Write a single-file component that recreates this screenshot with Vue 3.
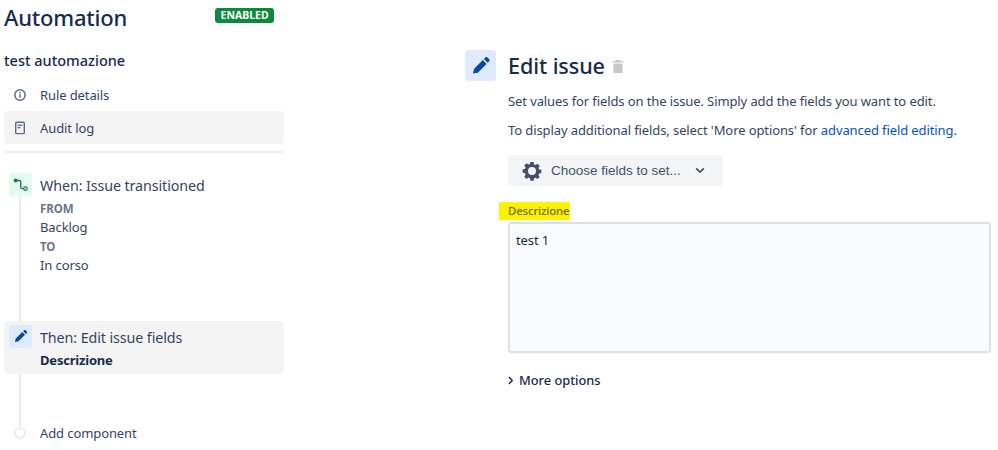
<script setup>
const nav = [
  { label: 'Rule details', icon: 'info', active: false },
  { label: 'Audit log', icon: 'log', active: true },
]
</script>

<template>
  <div class="page">
    <aside class="side">
      <header class="head">
        <h1>Automation</h1>
        <span class="badge">ENABLED</span>
      </header>
      <h2 class="rule">test automazione</h2>
      <nav class="nav">
        <div v-for="n in nav" :key="n.label" class="nav-item" :class="{ on: n.active }">
          <svg v-if="n.icon === 'info'" class="nav-ic" viewBox="0 0 14 14" width="14" height="14">
            <circle cx="7" cy="7" r="5.2" fill="none" stroke="#5e6c84" stroke-width="1.5" />
            <rect x="6.3" y="6.2" width="1.4" height="3.6" fill="#5e6c84" />
            <circle cx="7" cy="4.6" r=".85" fill="#5e6c84" />
          </svg>
          <svg v-else class="nav-ic" viewBox="0 0 14 14" width="14" height="14">
            <rect x="2.7" y="1.2" width="8.6" height="11.4" rx="1.2" fill="none" stroke="#5e6c84" stroke-width="1.4" />
            <rect x="4.6" y="3.6" width="4.8" height="1.3" fill="#5e6c84" />
            <rect x="4.6" y="6" width="2.8" height="1.3" fill="#5e6c84" />
          </svg>
          <span>{{ n.label }}</span>
        </div>
      </nav>
      <div class="rule-line"></div>

      <div class="timeline">
        <div class="track"></div>
        <div class="step when">
          <div class="step-ic green">
            <svg viewBox="0 0 23 23" width="23" height="23">
              <path d="M7 7.5h3.2c1 0 1.5.6 1.5 1.5v5c0 1 .5 1.6 1.5 1.6H16" fill="none" stroke="#1f7a5c" stroke-width="1.4" />
              <circle cx="6.6" cy="7.4" r="2" fill="#1f7a5c" />
              <circle cx="16.4" cy="15.6" r="1.7" fill="#e3fcef" stroke="#1f7a5c" stroke-width="1.3" />
            </svg>
          </div>
          <div class="step-body">
            <div class="step-title">When: Issue transitioned</div>
            <div class="cap">FROM</div>
            <div class="val">Backlog</div>
            <div class="cap">TO</div>
            <div class="val">In corso</div>
          </div>
        </div>
        <div class="step then">
          <div class="step-ic blue">
            <svg viewBox="0 0 23 23" width="23" height="23">
              <path d="M6 17l.7-3.4 6.6-6.6 2.8 2.8-6.6 6.5zM14.1 6.2l1-1c.4-.4 1-.4 1.4 0l1.4 1.4c.4.4.4 1 0 1.4l-1 1z" fill="#0747a6" />
            </svg>
          </div>
          <div class="step-body">
            <div class="step-title">Then: Edit issue fields</div>
            <div class="strong">Descrizione</div>
          </div>
        </div>
        <div class="add">
          <span class="dot"></span>
          <span>Add component</span>
        </div>
      </div>
    </aside>

    <main class="main">
      <div class="edit-head">
        <div class="big-ic">
          <svg viewBox="0 0 31 31" width="31" height="31">
            <path d="M8 23.5l1-4.6 8.8-8.8 3.8 3.8-8.8 8.8zM18.9 9l1.5-1.5c.6-.6 1.4-.6 2 0l1.8 1.8c.6.6.6 1.4 0 2L22.7 12.8z" fill="#0747a6" />
          </svg>
        </div>
        <h2 class="edit-title">Edit issue</h2>
        <svg class="trash" viewBox="0 0 12 14" width="12" height="14">
          <path d="M4.2 1h3.6l.5 1H11.5v1.6H.5V2h3.2zM1.4 4.6h9.2V13c0 .6-.4 1-1 1H2.4c-.6 0-1-.4-1-1z" fill="#c8c8c8" />
        </svg>
      </div>
      <div class="content">
        <p class="p1">Set values for fields on the issue. Simply add the fields you want to edit.</p>
        <p class="p2">To display additional fields, select 'More options' for <a class="link">advanced field editing</a>.</p>
        <button class="choose">
          <svg viewBox="0 0 20 20" width="20" height="20">
            <path fill="#42526e" fill-rule="evenodd" d="M8.4 1h3.2l.4 2.3 1.5.7 2-1.3 2.2 2.2-1.3 2 .7 1.5 2.3.4v3.2l-2.3.4-.7 1.5 1.3 2-2.2 2.2-2-1.3-1.5.7-.4 2.3H8.4L8 17.3l-1.5-.7-2 1.3-2.2-2.2 1.3-2-.7-1.5L.6 11.6V8.4L2.9 8l.7-1.5-1.3-2 2.2-2.2 2 1.3L8 3zM10 6a4 4 0 100 8 4 4 0 000-8z" />
          </svg>
          <span class="choose-text">Choose fields to set...</span>
          <svg class="chev" viewBox="0 0 10 7" width="10" height="7">
            <path d="M1.2 1.3L5 5l3.8-3.7" fill="none" stroke="#42526e" stroke-width="1.7" />
          </svg>
        </button>
        <label class="field-label">Descrizione</label>
        <div class="area">test 1</div>
        <div class="more">
          <svg viewBox="0 0 6 9" width="6" height="9">
            <path d="M1 1l3.2 3.5L1 8" fill="none" stroke="#172b4d" stroke-width="1.4" />
          </svg>
          <span>More options</span>
        </div>
      </div>
    </main>
  </div>
</template>

<style scoped>
.page {
  width: 998px;
  height: 450px;
  display: flex;
  overflow: hidden;
  background: #fff;
  color: #172b4d;
  font-family: "Noto Sans", "Open Sans", sans-serif;
  font-size: 13px;
  letter-spacing: -0.1px;
}
.side {
  width: 280px;
  margin-left: 4px;
  flex: none;
}
.head {
  height: 36px;
  display: flex;
  align-items: flex-start;
}
.head h1 {
  margin: 0;
  font-size: 22px;
  line-height: 35px;
  font-weight: 500;
  letter-spacing: -0.2px;
}
.badge {
  margin-left: 88px;
  margin-top: 8px;
  width: 59px;
  height: 15px;
  box-sizing: border-box;
  background: #0a8a3a;
  color: #fff;
  border-radius: 3px;
  font-size: 10.5px;
  font-weight: 700;
  line-height: 15px;
  text-align: center;
  letter-spacing: 0;
}
.rule {
  margin: 14px 0 0;
  font-size: 14.5px;
  line-height: 20px;
  font-weight: 500;
  letter-spacing: 0;
}
.nav {
  margin-top: 8px;
  display: flex;
  flex-direction: column;
}
.nav-item {
  height: 33px;
  display: flex;
  align-items: center;
  border-radius: 4px;
  color: #344563;
}
.nav-item.on {
  background: #f4f4f5;
}
.nav-ic {
  margin-left: 9px;
  margin-right: 13px;
}
.rule-line {
  height: 2px;
  background: #ebecf0;
  margin-top: 7px;
}
.timeline {
  position: relative;
  margin-top: 20px;
}
.track {
  position: absolute;
  left: 15px;
  top: 23px;
  width: 2px;
  height: 231px;
  background: #ebecf0;
}
.step {
  position: relative;
  display: flex;
  border-radius: 4px;
}
.when {
  height: 148px;
}
.when .step-title {
  margin-bottom: 1px;
}
.then {
  height: 53px;
  padding-top: 4px;
  box-sizing: border-box;
  background: #f4f4f5;
}
.step-ic {
  width: 23px;
  height: 23px;
  margin-left: 5px;
  border-radius: 3px;
  flex: none;
}
.step-ic svg {
  display: block;
}
.green {
  background: #e3fcef;
}
.blue {
  background: #deebff;
}
.step-body {
  margin-left: 8px;
}
.step-title {
  font-size: 14.3px;
  line-height: 25px;
  color: #344563;
}
.when .cap {
  font-size: 11.5px;
  font-weight: 700;
  color: #6b778c;
  line-height: 19px;
}
.val {
  line-height: 19px;
  color: #344563;
}
.strong {
  font-weight: 700;
  line-height: 20px;
  letter-spacing: -0.2px;
}
.add {
  position: relative;
  height: 40px;
  margin-top: 39px;
  display: flex;
  align-items: center;
  color: #344563;
}
.dot {
  width: 12px;
  height: 12px;
  box-sizing: border-box;
  border: 2px solid #ebecf0;
  background: #fff;
  border-radius: 50%;
  margin-left: 10px;
  margin-right: 14px;
}
.main {
  margin-left: 181px;
  flex: 1;
  padding-top: 50px;
}
.edit-head {
  display: flex;
  align-items: center;
  height: 31px;
}
.big-ic {
  width: 31px;
  height: 31px;
  background: #deebff;
  border-radius: 3px;
}
.big-ic svg {
  display: block;
}
.edit-title {
  margin: 0 0 0 12px;
  font-size: 21.6px;
  line-height: 31px;
  font-weight: 500;
  letter-spacing: -0.1px;
}
.trash {
  margin-left: 7px;
}
.content {
  margin-left: 43px;
  width: 483px;
}
.content p {
  margin: 0;
  line-height: 20px;
  color: #344563;
  white-space: nowrap;
}
.p1 {
  padding-top: 10px;
}
.p2 {
  padding-top: 9px;
}
.link {
  color: #0052cc;
}
.choose {
  margin-top: 15px;
  width: 215px;
  height: 31px;
  border: none;
  border-radius: 3px;
  background: #f4f5f7;
  display: flex;
  align-items: center;
  padding: 0 0 0 14px;
  font: inherit;
  color: #42526e;
}
.choose-text {
  margin-left: 9px;
  font-family: "Liberation Sans", sans-serif;
  font-size: 13.5px;
  letter-spacing: 0;
}
.chev {
  margin-left: 14px;
}
.field-label {
  display: block;
  margin: 16px 0 2px -9px;
  width: 71px;
  height: 18px;
  box-sizing: border-box;
  padding-left: 9px;
  background: #fff200;
  color: #6b6b1a;
  font-size: 11.3px;
  line-height: 18px;
  font-weight: 500;
  letter-spacing: -0.1px;
}
.area {
  height: 131px;
  box-sizing: border-box;
  border: 2px solid #dfe1e6;
  border-radius: 3px;
  background: #fafbfc;
  padding: 6px 6px;
  line-height: 20px;
  color: #172b4d;
}
.more {
  margin-top: 17px;
  display: flex;
  align-items: center;
  font-size: 12.8px;
  font-weight: 500;
  letter-spacing: 0;
  line-height: 20px;
}
.more span {
  margin-left: 5px;
}
</style>
